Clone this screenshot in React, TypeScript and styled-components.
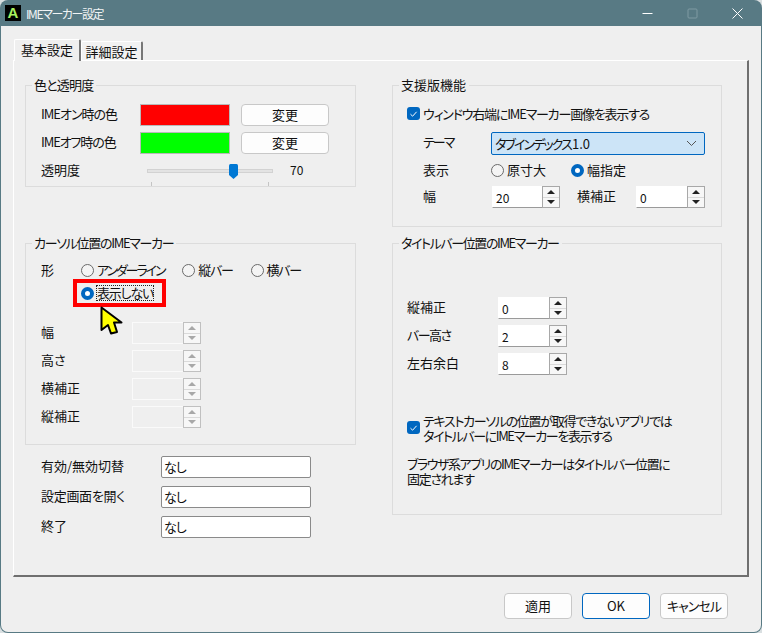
import React from "react";
import styled, { createGlobalStyle } from "styled-components";

const Global = createGlobalStyle`
  html, body { margin: 0; padding: 0; background: #d9dfe1; }
  * { box-sizing: border-box; }
  body {
    font-family: "Noto Sans CJK JP", "Noto Sans", sans-serif;
    font-size: 13px;
    line-height: 17px;
    color: #111;
    font-feature-settings: "palt";
  }
`;

const T = styled.span<{ $ls?: number }>`
  letter-spacing: ${(p) => p.$ls ?? 0}px;
  white-space: nowrap;
`;
const Window = styled.div`
  width: 762px;
  height: 633px;
  background: #587a84;
  border-radius: 8px;
  padding: 0 1px 1px 1px;
  display: flex;
  flex-direction: column;
  overflow: hidden;
`;
const TitleBar = styled.div`
  height: 26px;
  display: flex;
  align-items: center;
  color: #fff;
  padding-left: 4px;
`;
const AppLogo = styled.div`
  width: 16px;
  height: 16px;
  background: #000;
  color: #a8f060;
  font: bold 15px/16px "Liberation Sans", sans-serif;
  text-align: center;
  margin-right: 5px;
`;
const Caption = styled(T)`
  flex: 1;
  color: #f0f4f5;
  font-size: 12px;
`;
const WinButtons = styled.div`
  display: flex;
  align-items: center;
  gap: 34px;
  padding-right: 18px;
`;
const Body = styled.div`
  flex: 1;
  background: #efefef;
  padding: 13px 12px 0 12px;
  border-radius: 0 0 7px 7px;
  display: flex;
  flex-direction: column;
`;
const TabStrip = styled.div`
  display: flex;
  align-items: flex-end;
  height: 21px;
  padding-left: 1px;
`;
const Tab = styled.div<{ $active?: boolean }>`
  height: ${(p) => (p.$active ? "22px" : "19px")};
  width: ${(p) => (p.$active ? "67px" : "62px")};
  text-align: center;
  line-height: ${(p) => (p.$active ? "19px" : "20px")};
  background: ${(p) => (p.$active ? "#efefef" : "#f2f2f2")};
  border-top: 1px solid #fff;
  border-left: 1px solid #fff;
  border-right: 2px solid #777;
  border-radius: 2px 2px 0 0;
  position: relative;
  z-index: 1;
  margin-bottom: ${(p) => (p.$active ? "-1px" : "0")};
`;
const TabPage = styled.div`
  width: 736px;
  height: 517px;
  border-top: 1px solid #fff;
  border-left: 1px solid #fff;
  border-right: 2px solid #6f6f6f;
  border-bottom: 2px solid #6f6f6f;
  padding: 17px 26px 0 11px;
  display: grid;
  grid-template-columns: 331px 330px;
  column-gap: 36px;
  align-items: start;
`;
const Column = styled.div`
  display: flex;
  flex-direction: column;
`;
const Group = styled.fieldset<{ $h: number; $mb?: number; $pl?: number }>`
  height: ${(p) => p.$h}px;
  margin: 0 0 ${(p) => p.$mb ?? 0}px 0;
  padding: 11px 0 0 ${(p) => p.$pl ?? 15}px;
  border: 1px solid #dcdcdc;
  min-width: 0;
  position: relative;
`;
const Legend = styled.legend<{ $ls?: number; $ml?: number }>`
  padding: 0 3px 0 2px;
  margin-left: ${(p) => p.$ml ?? -9}px;
  line-height: 15px;
  letter-spacing: ${(p) => p.$ls ?? 0}px;
  position: relative;
  top: -1px;
`;
const ColorRow = styled.div`
  display: grid;
  grid-template-columns: 99px 90px 11px 88px;
  align-items: center;
  height: 22px;
  margin-bottom: 6px;
`;
const Swatch = styled.div<{ $color: string }>`
  height: 22px;
  background: ${(p) => p.$color};
  border: 1px solid #b9b9b9;
`;
const Btn = styled.div<{ $w?: number; $h?: number; $primary?: boolean }>`
  width: ${(p) => p.$w ?? 88}px;
  height: ${(p) => p.$h ?? 22}px;
  background: #fdfdfd;
  border: 1px solid ${(p) => (p.$primary ? "#0067c0" : "#c8c8c8")};
  border-radius: 4px;
  text-align: center;
  line-height: ${(p) => (p.$h ?? 22) - 3}px;
`;
const SliderRow = styled.div`
  display: grid;
  grid-template-columns: 106px 126px 17px auto;
  align-items: center;
  height: 22px;
`;
const Track = styled.div`
  height: 4px;
  background: #e3e3e3;
  border: 1px solid #d2d2d2;
  position: relative;
`;
const Thumb = styled.svg`
  position: absolute;
  left: 81px;
  top: -6px;
`;
const Ticks = styled.div`
  position: absolute;
  left: 0;
  right: 0;
  top: 12px;
  height: 5px;
  display: flex;
  justify-content: space-between;
  padding: 0 3px;
  &::before, &::after {
    content: "";
    width: 1px;
    height: 4px;
    background: #c4c4c4;
  }
`;
const Small = styled.span`
  font-size: 12px;
  padding-bottom: 3px;
`;
const Check = styled.div`
  display: flex;
  align-items: flex-start;
  gap: 3px;
  padding-top: 1px;
`;
const CheckBox = styled.div<{ $mt?: number }>`
  width: 13px;
  height: 13px;
  flex: none;
  margin-top: ${(p) => p.$mt ?? 2}px;
  background: #0067c0;
  border-radius: 3px;
  display: flex;
  align-items: center;
  justify-content: center;
`;
const ThemeGrid = styled.div`
  display: grid;
  grid-template-columns: 68px 214px;
  align-items: center;
  margin: 10px 0 0 16px;
`;
const Select = styled.div`
  height: 23px;
  width: 214px;
  background: #cce4f7;
  border: 1px solid #0067c0;
  border-radius: 2px;
  padding-left: 3px;
  line-height: 20px;
  display: flex;
  align-items: center;
  justify-content: space-between;
  padding-right: 7px;
  margin-bottom: 5px;
`;
const RadioLine = styled.div<{ $gap: number; $mb?: number }>`
  display: flex;
  gap: ${(p) => p.$gap}px;
  height: 20px;
  align-items: center;
  margin-bottom: ${(p) => p.$mb ?? 0}px;
`;
const Radio = styled.div`
  display: inline-flex;
  align-items: center;
  gap: 3px;
  white-space: nowrap;
`;
const RadioText = styled(T)`
  padding-bottom: 2px;
`;
const RadioMark = styled.span<{ $on?: boolean }>`
  width: 13px;
  height: 13px;
  border-radius: 50%;
  flex: none;
  background: ${(p) => (p.$on ? "#fff" : "#f4f4f4")};
  border: ${(p) => (p.$on ? "4px solid #0067c0" : "1px solid #6a6a6a")};
`;
const SpinRow = styled.div`
  display: flex;
  align-items: center;
  height: 22px;
`;
const RowLabel = styled(T)<{ $w: number; $pl?: number; $pb?: number }>`
  width: ${(p) => p.$w}px;
  padding-left: ${(p) => p.$pl ?? 0}px;
  padding-bottom: ${(p) => p.$pb ?? 3}px;
  flex: none;
`;
const SpinBox = styled.div<{ $w: number; $off?: boolean; $ml?: number }>`
  width: ${(p) => p.$w}px;
  height: 22px;
  margin-left: ${(p) => p.$ml ?? 0}px;
  display: flex;
  background: ${(p) => (p.$off ? "#efefef" : "#fff")};
  border-bottom: 1px solid ${(p) => (p.$off ? "#fafafa" : "#9a9a9a")};
  border-left: 1px solid ${(p) => (p.$off ? "#fafafa" : "#fff")};
  border-top: 1px solid ${(p) => (p.$off ? "#fafafa" : "#fff")};
`;
const SpinText = styled.span`
  flex: 1;
  padding-left: 3px;
  line-height: 21px;
  font-size: 12px;
`;
const SpinArrows = styled.div<{ $off?: boolean }>`
  width: 18px;
  margin-top: -1px;
  height: 22px;
  flex: none;
  border: 1px solid ${(p) => (p.$off ? "#c0c0c0" : "#a8a8a8")};
  background: #f7f7f7;
  display: flex;
  flex-direction: column;
`;
const SpinCell = styled.div<{ $down?: boolean }>`
  flex: 1;
  display: flex;
  align-items: center;
  justify-content: center;
  ${(p) => (p.$down ? "border-top: 1px solid #dadada;" : "")}
`;
const Arrow = styled.i<{ $down?: boolean; $off?: boolean }>`
  width: 0;
  height: 0;
  border-left: 4px solid transparent;
  border-right: 4px solid transparent;
  ${(p) => (p.$down ? "border-top" : "border-bottom")}: 4px solid ${(p) => (p.$off ? "#a8a8a8" : "#222")};
`;
const ShapeArea = styled.div`
  display: grid;
  grid-template-columns: 40px 1fr;
  margin-top: -2px;
`;
const ShapeLabel = styled.span`
  line-height: 20px;
`;
const ShapeRadios = styled.div`
  display: flex;
  flex-direction: column;
`;
const Focused = styled.div`
  width: 93px;
  height: 28px;
  border: 4px solid #f00;
  margin: -1px 0 0 -8px;
  padding-left: 4px;
  display: flex;
  align-items: center;
  gap: 3px;
  position: relative;
`;
const FocusText = styled(T)`
  outline: 1px dotted #222;
  line-height: 14px;
`;
const Cursor = styled.svg`
  position: absolute;
  left: 21px;
  top: 21px;
  z-index: 2;
`;
const Stack = styled.div<{ $top: number; $gap: number }>`
  display: flex;
  flex-direction: column;
  gap: ${(p) => p.$gap}px;
  margin-top: ${(p) => p.$top}px;
`;
const KeyRow = styled.div`
  display: flex;
  align-items: center;
  height: 22px;
  padding-left: 16px;
`;
const KeyInput = styled.div`
  width: 150px;
  height: 22px;
  background: #fff;
  border: 1px solid #8a8a8a;
  border-radius: 2px;
  padding-left: 2px;
  line-height: 20px;
  letter-spacing: -1px;
`;
const Note = styled.div<{ $top: number }>`
  margin-top: ${(p) => p.$top}px;
`;
const Line = styled.div<{ $ls: number }>`
  height: 15px;
  line-height: 15px;
  white-space: nowrap;
  letter-spacing: ${(p) => p.$ls}px;
`;
const Footer = styled.div`
  flex: 1;
  display: flex;
  justify-content: flex-end;
  align-items: flex-start;
  padding: 16px 21px 0 0;
  gap: 10px;
`;

const Spin = ({ value, w, off, ml }: { value?: string; w: number; off?: boolean; ml?: number }) => (
  <SpinBox $w={w} $off={off} $ml={ml}>
    <SpinText>{value}</SpinText>
    <SpinArrows $off={off}>
      <SpinCell><Arrow $off={off} /></SpinCell>
      <SpinCell $down><Arrow $down $off={off} /></SpinCell>
    </SpinArrows>
  </SpinBox>
);

const Tick = () => (
  <svg width="9" height="8" viewBox="0 0 9 8" fill="none">
    <path d="M1.5 4.2 L3.6 6.2 L7.6 1.8" stroke="#fff" strokeWidth="1" />
  </svg>
);

export default function App() {
  return (
    <>
      <Global />
      <Window>
        <TitleBar>
          <AppLogo>A</AppLogo>
          <Caption $ls={-1.4}>IMEマーカー設定</Caption>
          <WinButtons>
            <svg width="11" height="11" viewBox="0 0 11 11"><path d="M0.5 5.5h10" stroke="#fff" /></svg>
            <svg width="11" height="11" viewBox="0 0 11 11" fill="none"><rect x="1" y="1" width="9" height="9" rx="1" stroke="#7f9aa2" /></svg>
            <svg width="11" height="11" viewBox="0 0 11 11" fill="none"><path d="M0.5 0.5l10 10M10.5 0.5l-10 10" stroke="#fff" /></svg>
          </WinButtons>
        </TitleBar>
        <Body>
          <TabStrip>
            <Tab $active>基本設定</Tab>
            <Tab>詳細設定</Tab>
          </TabStrip>
          <TabPage>
            <Column>
              <Group $h={109} $mb={49}>
                <Legend $ls={-0.8}>色と透明度</Legend>
                <ColorRow>
                  <RowLabel $w={99} $ls={-1}>IMEオン時の色</RowLabel>
                  <Swatch $color="#ff0000" />
                  <span />
                  <Btn>変更</Btn>
                </ColorRow>
                <ColorRow>
                  <RowLabel $w={99} $ls={-1.1}>IMEオフ時の色</RowLabel>
                  <Swatch $color="#00ff00" />
                  <span />
                  <Btn>変更</Btn>
                </ColorRow>
                <SliderRow>
                  <RowLabel $w={106} $pb={4}>透明度</RowLabel>
                  <Track>
                    <Thumb width="9" height="15" viewBox="0 0 9 15">
                      <path d="M0 1.5Q0 0 1.5 0h6Q9 0 9 1.5V11L4.5 15 0 11Z" fill="#0078d4" />
                    </Thumb>
                    <Ticks />
                  </Track>
                  <span />
                  <Small>70</Small>
                </SliderRow>
              </Group>
              <Group $h={209} $mb={11}>
                <Legend $ls={-1.3}>カーソル位置のIMEマーカー</Legend>
                <ShapeArea>
                  <ShapeLabel>形</ShapeLabel>
                  <ShapeRadios>
                    <RadioLine $gap={18}>
                      <Radio><RadioMark /><RadioText $ls={-2.1}>アンダーライン</RadioText></Radio>
                      <Radio><RadioMark /><RadioText $ls={-1.3}>縦バー</RadioText></Radio>
                      <Radio><RadioMark /><RadioText $ls={-1.3}>横バー</RadioText></Radio>
                    </RadioLine>
                    <Focused>
                      <RadioMark $on />
                      <FocusText $ls={-1.2}>表示しない</FocusText>
                      <Cursor width="25" height="32" viewBox="0 0 25 32">
                        <path d="M3.5 3.5V26L10 21L13 29.5L19 28L16 18.5H23.5Z" fill="#ffff00" stroke="#000" strokeWidth="2" strokeLinejoin="round" />
                      </Cursor>
                    </Focused>
                  </ShapeRadios>
                </ShapeArea>
                <Stack $top={15} $gap={6}>
                  <SpinRow><RowLabel $w={91}>幅</RowLabel><Spin w={69} off /></SpinRow>
                  <SpinRow><RowLabel $w={91}>高さ</RowLabel><Spin w={69} off /></SpinRow>
                  <SpinRow><RowLabel $w={91}>横補正</RowLabel><Spin w={69} off /></SpinRow>
                  <SpinRow><RowLabel $w={91}>縦補正</RowLabel><Spin w={69} off /></SpinRow>
                </Stack>
              </Group>
              <Stack $top={0} $gap={8}>
                <KeyRow><RowLabel $w={120}>有効/無効切替</RowLabel><KeyInput>なし</KeyInput></KeyRow>
                <KeyRow><RowLabel $w={120} $ls={-0.3}>設定画面を開く</RowLabel><KeyInput>なし</KeyInput></KeyRow>
                <KeyRow><RowLabel $w={120}>終了</RowLabel><KeyInput>なし</KeyInput></KeyRow>
              </Stack>
            </Column>
            <Column>
              <Group $h={149} $mb={9} $pl={14}>
                <Legend $ml={-8}>支援版機能</Legend>
                <Check><CheckBox><Tick /></CheckBox><T $ls={-1.2}>ウィンドウ右端にIMEマーカー画像を表示する</T></Check>
                <ThemeGrid>
                  <RowLabel $w={68} $ls={-2} $pb={9}>テーマ</RowLabel>
                  <Select><T $ls={-1.9}>タブインデックス <T $ls={0}>1.0</T></T>
                    <svg width="11" height="7" viewBox="0 0 11 7" fill="none"><path d="M1 1l4.5 4.5L10 1" stroke="#555" /></svg>
                  </Select>
                  <RowLabel $w={68} $pb={8}>表示</RowLabel>
                  <RadioLine $gap={25} $mb={6}>
                    <Radio><RadioMark /><RadioText>原寸大</RadioText></Radio>
                    <Radio><RadioMark $on /><RadioText>幅指定</RadioText></Radio>
                  </RadioLine>
                  <RowLabel $w={68}>幅</RowLabel>
                  <SpinRow>
                    <Spin w={68} value="20" ml={1} />
                    <RowLabel $w={76} $pl={17}>横補正</RowLabel>
                    <Spin w={69} value="0" />
                  </SpinRow>
                </ThemeGrid>
              </Group>
              <Group $h={279} $pl={14}>
                <Legend $ls={-1.4} $ml={-8}>タイトルバー位置のIMEマーカー</Legend>
                <Stack $top={35} $gap={6}>
                  <SpinRow><RowLabel $w={91}>縦補正</RowLabel><Spin w={69} value="0" /></SpinRow>
                  <SpinRow><RowLabel $w={91} $ls={-1.5}>バー高さ</RowLabel><Spin w={69} value="2" /></SpinRow>
                  <SpinRow><RowLabel $w={91}>左右余白</RowLabel><Spin w={69} value="8" /></SpinRow>
                </Stack>
                <Note $top={37}>
                  <Check>
                    <CheckBox $mt={8}><Tick /></CheckBox>
                    <div>
                      <Line $ls={-1.3}>テキストカーソルの位置が取得できないアプリでは</Line>
                      <Line $ls={-1.4}>タイトルバーにIMEマーカーを表示する</Line>
                    </div>
                  </Check>
                </Note>
                <Note $top={13}>
                  <Line $ls={-1.45}>ブラウザ系アプリのIMEマーカーはタイトルバー位置に</Line>
                  <Line $ls={-1.3}>固定されます</Line>
                </Note>
              </Group>
            </Column>
          </TabPage>
          <Footer>
            <Btn $w={68} $h={26}>適用</Btn>
            <Btn $w={68} $h={26} $primary>OK</Btn>
            <Btn $w={68} $h={26}><T $ls={-1}>キャンセル</T></Btn>
          </Footer>
        </Body>
      </Window>
    </>
  );
}
